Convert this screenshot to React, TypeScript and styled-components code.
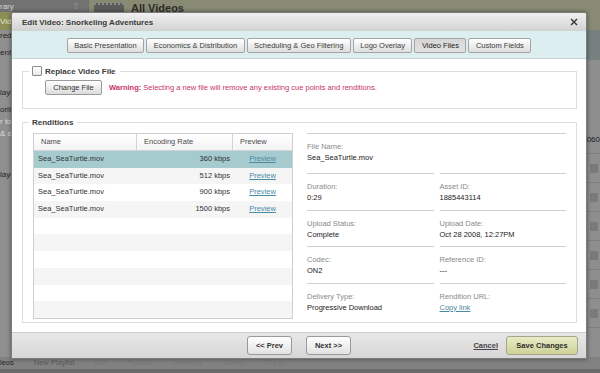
import React from 'react';
import styled, { createGlobalStyle } from 'styled-components';

const GlobalStyle = createGlobalStyle`
	html, body {
		margin: 0;
		padding: 0;
	}
	body {
		font-family: "Liberation Sans", Arial, sans-serif;
		background: #8e8e8e;
	}
`;

type Rendition = { name: string; rate: string };

const renditions: Rendition[] = [
	{ name: 'Sea_SeaTurtle.mov', rate: '360 kbps' },
	{ name: 'Sea_SeaTurtle.mov', rate: '512 kbps' },
	{ name: 'Sea_SeaTurtle.mov', rate: '900 kbps' },
	{ name: 'Sea_SeaTurtle.mov', rate: '1500 kbps' },
];

const tabs = [
	'Basic Presentation',
	'Economics & Distribution',
	'Scheduling & Geo Filtering',
	'Logo Overlay',
	'Video Files',
	'Custom Fields',
];

// only the left edge of the sidebar peeks out from behind the dialog
const sideItems = [
	{ text: 'red', gap: 0 },
	{ text: 'ently', gap: 5 },
	{ text: 'layl', gap: 28 },
	{ text: 'orite', gap: 5 },
	{ text: 'r to', gap: 0, light: true },
	{ text: '& d', gap: 0, light: true },
	{ text: 'layo', gap: 29 },
];

const CloseIcon = () => (
	<svg width="8" height="8" viewBox="0 0 8 8">
		<path d="M1 1 L7 7 M7 1 L1 7" stroke="#333" strokeWidth="1.4" />
	</svg>
);

export const App = () => {
	return (
		<Screen>
			<GlobalStyle />

			<Backdrop>
				<Workspace>
					<Sidebar>
						<SideHead>
							rary <UpArrow>⇧</UpArrow>
						</SideHead>
						<SideActive>Vide</SideActive>
						{sideItems.map(({ text, gap, light }, idx) => (
							<SideItem key={idx} $gap={gap} $light={light}>
								{text}
							</SideItem>
						))}
					</Sidebar>

					<Main>
						<MainHeader>
							<HeaderIcon />
							<HeaderTitle>All Videos</HeaderTitle>
						</MainHeader>
						<SubBar />
						<VideoList>
							<VideoRow>
								<RowText>060</RowText>
							</VideoRow>
							{[0, 1, 2, 3, 4, 5].map((i) => (
								<VideoRow key={i}>
									<RowIcon />
								</VideoRow>
							))}
						</VideoList>
					</Main>
				</Workspace>

				<BottomBar>
					<BottomTab>leos</BottomTab>
					<BottomTab $wide>New Playlist</BottomTab>
					<BottomTab>Edit</BottomTab>
					<BottomTab>Publish</BottomTab>
					<BottomTab>Generate</BottomTab>
					<BottomTab>Delete</BottomTab>
					<BottomTab>Cut to</BottomTab>
				</BottomBar>
			</Backdrop>

			<Modal>
				<TitleBar>
					<Title>Edit Video: Snorkeling Adventures</Title>
					<CloseButton>
						<CloseIcon />
					</CloseButton>
				</TitleBar>

				<TabBar>
					{tabs.map((t) => (
						<Tab key={t} $selected={t === 'Video Files'}>
							{t}
						</Tab>
					))}
				</TabBar>

				<Body>
					<ReplaceSet>
						<Legend>
							<Checkbox />
							Replace Video File
						</Legend>
						<ReplaceRow>
							<SmallButton>Change File</SmallButton>
							<Warning>
								<b>Warning:</b> Selecting a new file will remove any
								existing cue points and renditions.
							</Warning>
						</ReplaceRow>
					</ReplaceSet>

					<RenditionSet>
						<Legend>Renditions</Legend>
						<RenditionLayout>
							<Table>
								<HeadRow>
									<HeadCell>Name</HeadCell>
									<HeadCell>Encoding Rate</HeadCell>
									<HeadCell $last>Preview</HeadCell>
								</HeadRow>
								{Array.from({ length: 10 }).map((_, idx) => {
									const r = renditions[idx];
									return (
										<Row key={idx} $selected={idx === 0} $odd={idx % 2 === 1}>
											<Cell>{r?.name}</Cell>
											<Cell $right>{r?.rate}</Cell>
											<Cell $center>{r && <TextLink>Preview</TextLink>}</Cell>
										</Row>
									);
								})}
							</Table>

							<Details>
								<Field $full $first>
									<FieldLabel>File Name:</FieldLabel>
									<FieldValue>Sea_SeaTurtle.mov</FieldValue>
								</Field>
								<Field>
									<FieldLabel>Duration:</FieldLabel>
									<FieldValue>0:29</FieldValue>
								</Field>
								<Field>
									<FieldLabel>Asset ID:</FieldLabel>
									<FieldValue>1885443114</FieldValue>
								</Field>
								<Field>
									<FieldLabel>Upload Status:</FieldLabel>
									<FieldValue>Complete</FieldValue>
								</Field>
								<Field>
									<FieldLabel>Upload Date:</FieldLabel>
									<FieldValue>Oct 28 2008, 12:27PM</FieldValue>
								</Field>
								<Field>
									<FieldLabel>Codec:</FieldLabel>
									<FieldValue>ON2</FieldValue>
								</Field>
								<Field>
									<FieldLabel>Reference ID:</FieldLabel>
									<FieldValue>---</FieldValue>
								</Field>
								<Field>
									<FieldLabel>Delivery Type:</FieldLabel>
									<FieldValue>Progressive Download</FieldValue>
								</Field>
								<Field>
									<FieldLabel>Rendition URL:</FieldLabel>
									<FieldValue>
										<TextLink>Copy link</TextLink>
									</FieldValue>
								</Field>
							</Details>
						</RenditionLayout>
					</RenditionSet>
				</Body>

				<Footer>
					<NavGroup>
						<NavButton>&lt;&lt; Prev</NavButton>
						<NavButton>Next &gt;&gt;</NavButton>
					</NavGroup>
					<ActionGroup>
						<CancelLink>Cancel</CancelLink>
						<SaveButton>Save Changes</SaveButton>
					</ActionGroup>
				</Footer>
			</Modal>
		</Screen>
	);
};

export default App;

/* ---------- backdrop (dimmed app) ---------- */

const Screen = styled.div`
	position: relative;
	width: 600px;
	height: 373px;
	overflow: hidden;
	font-size: 7.5px;
	color: #333;
`;

const Backdrop = styled.div`
	display: flex;
	flex-direction: column;
	height: 100%;
`;

const Workspace = styled.div`
	display: flex;
	flex: 1;
	min-height: 0;
`;

const Sidebar = styled.div`
	width: 88px;
	background: #8f8f8f;
	border-right: 1px solid #6e6e6e;
	display: flex;
	flex-direction: column;
	color: #262626;
	font-size: 8px;
`;

const SideHead = styled.div`
	height: 12px;
	background: #727272;
	color: #d4d4d4;
	display: flex;
	align-items: center;
	justify-content: space-between;
	padding-right: 8px;
`;

const UpArrow = styled.span`
	color: #9a9a9a;
	font-size: 9px;
`;

const SideActive = styled.div`
	height: 18px;
	line-height: 19px;
	background: #8b8e55;
	color: #e6e8cc;
`;

const SideItem = styled.div<{ $gap: number; $light?: boolean }>`
	height: 12px;
	line-height: 12px;
	margin-top: ${(p) => p.$gap}px;
	color: ${(p) => (p.$light ? '#dedede' : '#262626')};
`;

const Main = styled.div`
	flex: 1;
	display: flex;
	flex-direction: column;
`;

const MainHeader = styled.div`
	height: 30px;
	background: #898a74;
	display: flex;
	align-items: flex-start;
	gap: 7px;
	padding: 3px 0 0 5px;
	box-sizing: border-box;
`;

const HeaderIcon = styled.div`
	width: 30px;
	height: 10px;
	background: #5c5c5c;
	border-top: 2px dotted #8a8a8a;
`;

const HeaderTitle = styled.div`
	font-size: 11px;
	font-weight: bold;
	color: #2e2e2a;
	margin-top: -1px;
`;

const SubBar = styled.div`
	height: 30px;
	background: #76807f;
`;

const VideoList = styled.div`
	flex: 1;
	background: #8e8e8e;
	padding-top: 65px;
`;

const VideoRow = styled.div`
	height: 28px;
	border-bottom: 1px solid #7e7e7e;
	display: flex;
	align-items: center;
	justify-content: flex-end;
	padding-right: 2px;
`;

const RowText = styled.span`
	color: #1e1e1e;
	font-size: 8px;
	margin-right: -2px;
`;

const RowIcon = styled.div`
	width: 8px;
	height: 9px;
	background: #7a7a7a;
	border-radius: 1px;
`;

const BottomBar = styled.div`
	height: 16px;
	background: #818181;
	border-bottom: 4px solid #6a6a6a;
	display: flex;
	align-items: flex-end;
	gap: 20px;
	color: #6b6b6b;
	font-size: 7.5px;
	padding-bottom: 2px;
	box-sizing: border-box;
`;

const BottomTab = styled.span<{ $wide?: boolean }>`
	color: ${(p) => (p.$wide ? '#5a5a5a' : '#777')};
	&:first-child {
		color: #262626;
	}
`;

/* ---------- modal ---------- */

const Modal = styled.div`
	position: absolute;
	left: 11px;
	top: 12px;
	width: 576px;
	height: 347px;
	background: #fff;
	border: 1px solid #7c7c7c;
	border-radius: 3px 3px 0 0;
	box-shadow: 0 0 4px rgba(0, 0, 0, 0.45);
	display: flex;
	flex-direction: column;
	box-sizing: border-box;
	overflow: hidden;
`;

const TitleBar = styled.div`
	height: 18px;
	flex-shrink: 0;
	background: linear-gradient(#f0f0f0, #d2d2d2);
	display: flex;
	align-items: center;
	justify-content: space-between;
	padding: 0 8px 0 10px;
`;

const Title = styled.div`
	font-size: 8px;
	font-weight: bold;
	color: #3a3a3a;
`;

const CloseButton = styled.div`
	display: flex;
	align-items: center;
`;

const TabBar = styled.div`
	height: 28px;
	flex-shrink: 0;
	background: #ddeef0;
	border-bottom: 1px solid #c4d4d6;
	display: flex;
	justify-content: center;
	align-items: flex-start;
	gap: 2px;
	padding-top: 7px;
	box-sizing: border-box;
`;

const Tab = styled.div<{ $selected?: boolean }>`
	height: 15px;
	line-height: 14px;
	padding: 0 6.5px;
	box-sizing: border-box;
	border: 1px solid #a4a4a4;
	border-radius: 2px;
	background: ${(p) =>
		p.$selected ? 'linear-gradient(#d6d6d6, #e2e2e2)' : 'linear-gradient(#ffffff, #dedede)'};
	color: ${(p) => (p.$selected ? '#222' : '#3c3c3c')};
	font-size: 7.5px;
	white-space: nowrap;
`;

const Body = styled.div`
	flex: 1;
	padding: 7px 9px 0 10px;
	display: flex;
	flex-direction: column;
`;

const Fieldset = styled.fieldset`
	margin: 0;
	border: 1px solid #dedede;
	padding: 0 10px;
	min-width: 0;
`;

const ReplaceSet = styled(Fieldset)`
	height: 43px;
	box-sizing: border-box;
`;

const RenditionSet = styled(Fieldset)`
	margin-top: 9px;
	height: 205px;
	box-sizing: border-box;
`;

const Legend = styled.legend`
	padding: 0 4px 0 3px;
	margin-left: -4px;
	font-size: 8px;
	font-weight: bold;
	color: #3c3c3c;
	display: flex;
	align-items: center;
	gap: 3px;
`;

const Checkbox = styled.span`
	width: 10px;
	height: 10px;
	border: 1px solid #8c8c8c;
	background: linear-gradient(#ffffff, #e8e8e8);
	border-radius: 1px;
	box-sizing: border-box;
	display: inline-block;
`;

const ReplaceRow = styled.div`
	display: flex;
	align-items: center;
	gap: 7px;
	padding: 4px 0 0 12px;
`;

const SmallButton = styled.div`
	width: 57px;
	height: 15px;
	line-height: 13px;
	box-sizing: border-box;
	text-align: center;
	border: 1px solid #9a9a9a;
	border-radius: 2px;
	background: linear-gradient(#ffffff, #dcdcdc);
	color: #333;
	font-size: 7.5px;
`;

const Warning = styled.div`
	color: #c8336b;
	font-size: 7.5px;
	b {
		font-weight: bold;
	}
`;

const RenditionLayout = styled.div`
	display: flex;
	gap: 14px;
	padding-top: 6px;
`;

const Table = styled.div`
	width: 261px;
	border: 1px solid #cfcfcf;
	box-sizing: border-box;
	display: grid;
	grid-template-columns: 103px 96px 1fr;
	grid-auto-rows: 16.7px;
	grid-template-rows: 17px;
	background: #fff;
`;

const HeadRow = styled.div`
	display: contents;
`;

const HeadCell = styled.div<{ $last?: boolean }>`
	border-bottom: 1px solid #d4d4d4;
	border-right: ${(p) => (p.$last ? 'none' : '1px solid #d4d4d4')};
	background: linear-gradient(#ffffff, #f4f4f4);
	color: #4a4a4a;
	padding-left: 7px;
	line-height: 16px;
`;

const Row = styled.div<{ $selected?: boolean; $odd?: boolean }>`
	display: contents;
	& > div {
		background: ${(p) => (p.$selected ? '#a6cbcf' : p.$odd ? '#f5f5f5' : '#ffffff')};
	}
`;

const Cell = styled.div<{ $right?: boolean; $center?: boolean }>`
	line-height: 16.7px;
	color: #333;
	padding: ${(p) => (p.$right ? '0 3px 0 0' : p.$center ? '0' : '0 0 0 4px')};
	text-align: ${(p) => (p.$right ? 'right' : p.$center ? 'center' : 'left')};
	white-space: nowrap;
`;

const TextLink = styled.span`
	color: #4a8aa2;
	text-decoration: underline;
`;

const Details = styled.div`
	width: 260px;
	display: grid;
	grid-template-columns: 1fr 1fr;
	column-gap: 6px;
`;

const Field = styled.div<{ $full?: boolean; $first?: boolean }>`
	grid-column: ${(p) => (p.$full ? '1 / -1' : 'auto')};
	border-top: 1px solid #cfcfcf;
	height: ${(p) => (p.$first ? '40px' : '36px')};
	padding-top: 7px;
	box-sizing: border-box;
`;

const FieldLabel = styled.div`
	color: #8a8a8a;
	line-height: 11px;
`;

const FieldValue = styled.div`
	color: #222;
	line-height: 11px;
`;

const Footer = styled.div`
	height: 26px;
	flex-shrink: 0;
	border-top: 1px solid #cdcdcd;
	background: linear-gradient(#e8e8e8, #d6d6d6);
	display: flex;
	align-items: flex-start;
	justify-content: space-between;
	padding: 3px 8px 0 235px;
	box-sizing: border-box;
`;

const NavGroup = styled.div`
	display: flex;
	gap: 14px;
`;

const ActionGroup = styled.div`
	display: flex;
	align-items: center;
	gap: 8px;
	height: 19px;
`;

const BaseButton = styled.div`
	height: 19px;
	line-height: 17px;
	box-sizing: border-box;
	border: 1px solid #9a9a9a;
	border-radius: 3px;
	font-size: 7.5px;
	font-weight: bold;
	text-align: center;
	color: #333;
`;

const NavButton = styled(BaseButton)`
	width: 45px;
	background: linear-gradient(#ffffff, #e2e2e2);
`;

const SaveButton = styled(BaseButton)`
	width: 72px;
	border-color: #a3a68a;
	background: linear-gradient(#e9ebc6, #cdd196);
	color: #2e2e2e;
`;

const CancelLink = styled.span`
	font-size: 7.5px;
	font-weight: bold;
	color: #444;
	text-decoration: underline;
`;
